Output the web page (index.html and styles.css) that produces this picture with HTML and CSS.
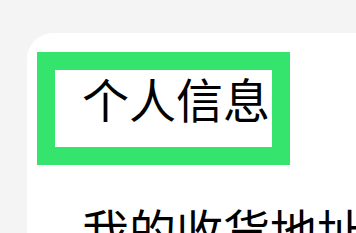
FILE: index.html
```html
<!DOCTYPE html>
<html lang="zh-CN">
<head>
    <meta charset="UTF-8">
    <meta name="viewport" content="width=device-width, initial-scale=1.0">
    <title>设置</title>
    <link rel="stylesheet" href="styles.css">
</head>
<body>
    <div class="page">
        <div class="card">
            <div class="menu-item active">个人信息</div>
            <div class="menu-item">我的收货地址</div>
        </div>
    </div>
</body>
</html>
```

FILE: styles.css
```css
body {
    margin: 0;
    background-color: #f4f4f4;
    font-family: 'Noto Sans CJK SC', 'Noto Sans', sans-serif;
    color: #000;
    overflow: hidden;
}
.page {
    padding: 33px 0 0 27px;
}
.card {
    background-color: #fff;
    border-radius: 26px 0 0 0;
    width: 329px;
    height: 200px;
    padding: 19px 0 0 10px;
    box-sizing: border-box;
}
.menu-item {
    font-size: 47px;
    line-height: 48px;
    padding: 40px 0 16px 45px;
    white-space: nowrap;
}
.menu-item.active {
    width: 253px;
    box-sizing: border-box;
    border: 18px solid #34e46c;
    padding: 4px 0 25px 27px;
}
```
